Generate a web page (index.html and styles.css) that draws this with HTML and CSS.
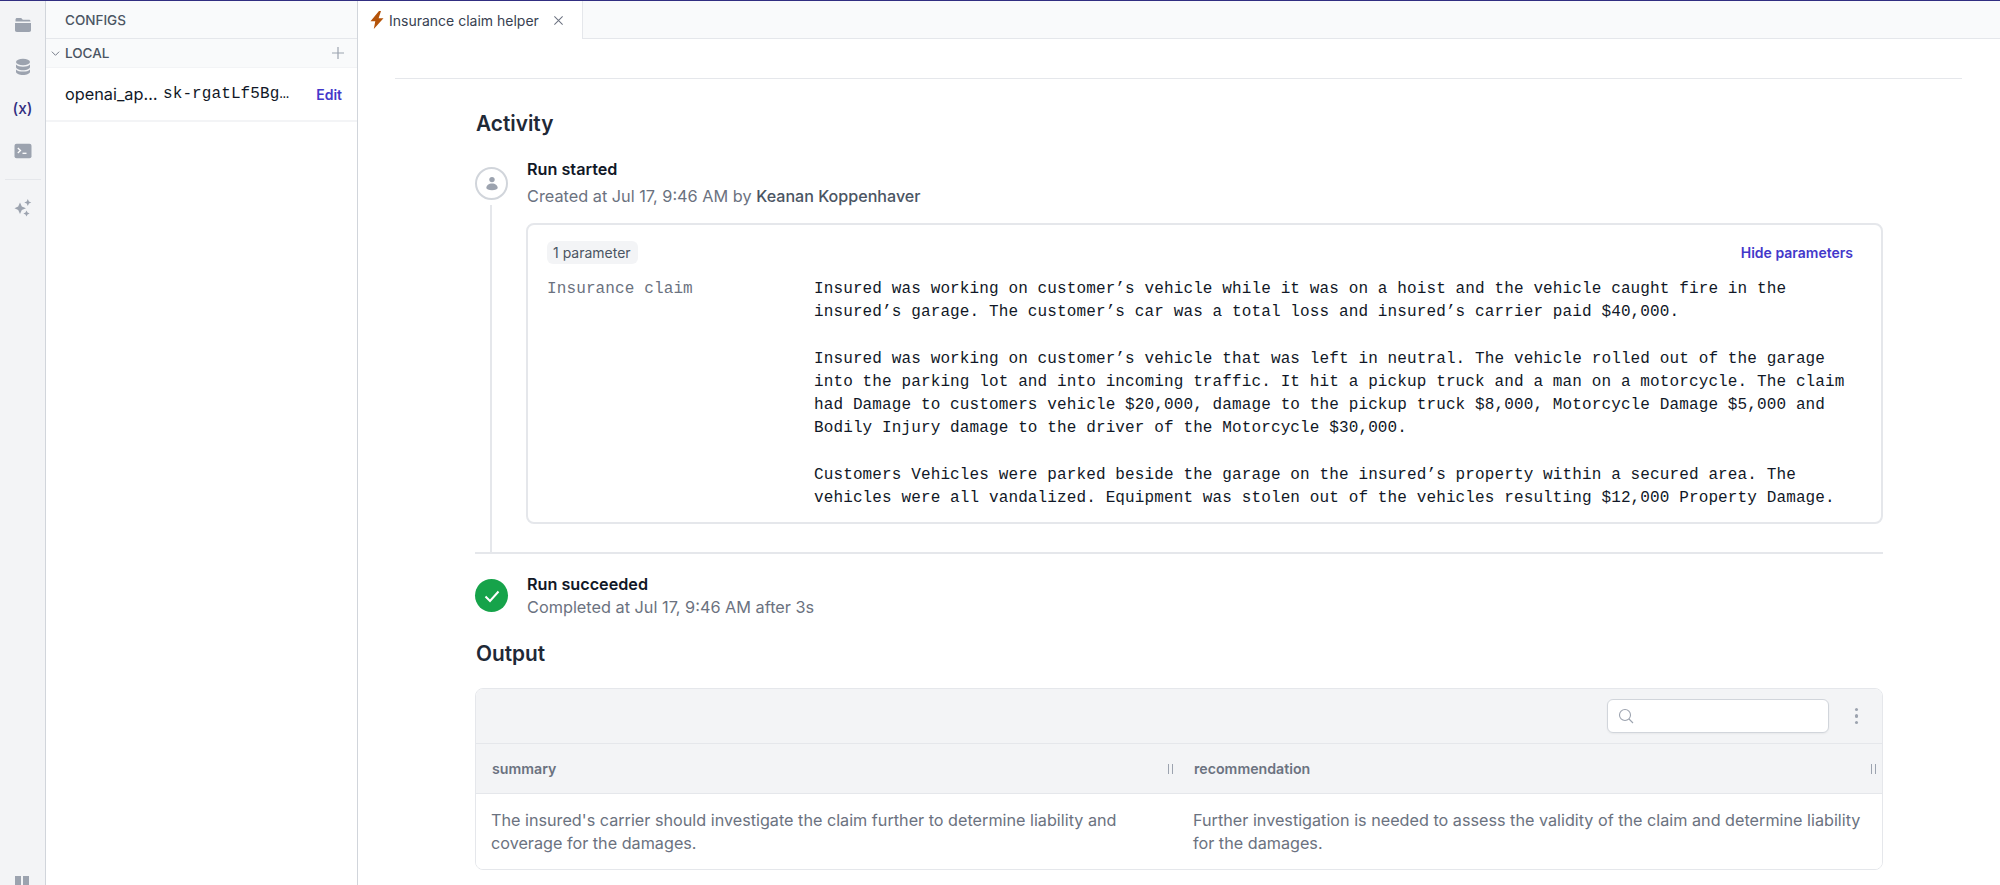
FILE: index.html
```html
<!DOCTYPE html>
<html lang="en">
<head>
<meta charset="utf-8">
<title>Insurance claim helper</title>
<link rel="stylesheet" href="styles.css">
</head>
<body>
<div class="app">
  <nav class="rail">
    <div class="rail-top">
      <svg class="rail-icon" viewBox="0 0 20 20"><path fill="#9ca3af" d="M4 3h4.200l1.600 1.800H16c.8 0 1.500.6 1.500 1.400v.3h-15V4.500C2.500 3.700 3.200 3 4 3z"/><path fill="#9ca3af" d="M2 8h16v7.300c0 1-.8 1.700-1.800 1.700H3.800c-1 0-1.800-.7-1.800-1.700z"/></svg>
      <svg class="rail-icon" viewBox="0 0 20 20"><ellipse fill="#9ca3af" cx="10" cy="5" rx="7" ry="3.300"/><path fill="#9ca3af" d="M3 7.600c1.300 1.500 4 2.200 7 2.200s5.700-.7 7-2.200v2.400c0 1.800-3.100 3.300-7 3.300s-7-1.500-7-3.300z"/><path fill="#9ca3af" d="M3 12.400c1.300 1.500 4 2.200 7 2.200s5.700-.7 7-2.200v2.300c0 1.800-3.100 3.300-7 3.300s-7-1.500-7-3.300z"/></svg>
      <span class="rail-var">(<i>x</i>)</span>
      <svg class="rail-icon" viewBox="0 0 20 20"><rect fill="#9ca3af" x="1.500" y="2.800" width="17" height="14.400" rx="2"/><path d="M4.800 7l2.700 2.500-2.700 2.500" fill="none" stroke="#fff" stroke-width="1.300"/><path d="M9.500 12.300h4" stroke="#fff" stroke-width="1.300"/></svg>
      <div class="rail-sep"></div>
      <svg class="rail-icon" viewBox="0 0 20 20"><path fill="#9ca3af" d="M7 4.500l1.800 4 4.200 1.700-4.200 1.700L7 16l-1.800-4.100L1.500 10.200l3.700-1.700z"/><path fill="#9ca3af" d="M14.800 1l1.100 2.400 2.400 1.100-2.400 1.100L14.800 8l-1.100-2.400-2.400-1.100 2.400-1.100z"/><path fill="#9ca3af" d="M13.500 12.500l1 2 2.100 1-2.100 1-1 2-1-2-2.100-1 2.100-1z"/></svg>
    </div>
    <div class="rail-pause"><span></span><span></span></div>
  </nav>

  <aside class="side">
    <div class="side-title">CONFIGS</div>
    <div class="side-group">
      <svg class="chev" viewBox="0 0 12 12"><path d="M2 4l4 4 4-4" fill="none" stroke="#6b7280" stroke-width="1"/></svg>
      <span class="side-group-name">LOCAL</span>
      <svg class="plus" viewBox="0 0 14 14"><path d="M7 1v12M1 7h12" stroke="#9ca3af" stroke-width="1.200"/></svg>
    </div>
    <div class="side-row">
      <span class="cfg-key">openai_ap…</span>
      <span class="cfg-val">sk-rgatLf5Bg…</span>
      <span class="cfg-edit">Edit</span>
    </div>
  </aside>

  <main class="main">
    <div class="tabs">
      <div class="tab">
        <svg class="bolt" viewBox="0 0 14 18"><path fill="#b45309" d="M9 0L.5 10.300h4.800L3.800 18l9.700-10.800H8.600L11 0z"/></svg>
        <span class="tab-name">Insurance claim helper</span>
        <svg class="tab-x" viewBox="0 0 12 12"><path d="M1.500 1.500l9 9M10.500 1.500l-9 9" stroke="#6b7280" stroke-width="1.100"/></svg>
      </div>
    </div>
    <div class="content">
      <div class="rule"></div>
      <div class="inner">
        <h2 class="heading">Activity</h2>
        <section class="event event-start">
          <div class="event-gutter">
            <div class="avatar">
              <svg viewBox="0 0 16 16"><circle cx="8" cy="3.600" r="2.700" fill="#9ca3af"/><path d="M2.300 12c0-2.800 2.500-4.600 5.700-4.600s5.700 1.800 5.700 4.600c0 1.200-2.500 2.200-5.700 2.200S2.300 13.200 2.300 12z" fill="#9ca3af"/></svg>
            </div>
            <div class="event-line"></div>
          </div>
          <div class="event-body">
            <div class="event-title">Run started</div>
            <div class="event-sub">Created at Jul 17, 9:46 AM by <span class="event-user">Keanan Koppenhaver</span></div>
            <div class="params">
              <div class="params-top">
                <span class="pill">1 parameter</span>
                <span class="link-hide">Hide parameters</span>
              </div>
              <div class="param-row">
                <div class="param-key">Insurance claim</div>
                <div class="param-val">Insured was working on customer’s vehicle while it was on a hoist and the vehicle caught fire in the
insured’s garage. The customer’s car was a total loss and insured’s carrier paid $40,000.

Insured was working on customer’s vehicle that was left in neutral. The vehicle rolled out of the garage
into the parking lot and into incoming traffic. It hit a pickup truck and a man on a motorcycle. The claim
had Damage to customers vehicle $20,000, damage to the pickup truck $8,000, Motorcycle Damage $5,000 and
Bodily Injury damage to the driver of the Motorcycle $30,000.

Customers Vehicles were parked beside the garage on the insured’s property within a secured area. The
vehicles were all vandalized. Equipment was stolen out of the vehicles resulting $12,000 Property Damage.</div>
              </div>
            </div>
          </div>
        </section>
        <div class="event-rule"></div>
        <section class="event event-done">
          <div class="check">
            <svg viewBox="0 0 16 16"><path d="M1.500 8.500l4.500 4.500L14.500 3.500" fill="none" stroke="#fff" stroke-width="2"/></svg>
          </div>
          <div class="event-body">
            <div class="event-title">Run succeeded</div>
            <div class="event-sub event-sub-tight">Completed at Jul 17, 9:46 AM after 3s</div>
          </div>
        </section>
        <h2 class="heading heading-output">Output</h2>
        <div class="table">
          <div class="toolbar">
            <div class="search">
              <svg viewBox="0 0 16 16"><circle cx="7" cy="7" r="5.500" fill="none" stroke="#9ca3af" stroke-width="1.100"/><path d="M11 11l4 4" stroke="#9ca3af" stroke-width="1.100"/></svg>
            </div>
            <div class="dots"><span></span><span></span><span></span></div>
          </div>
          <div class="thead">
            <div class="th"><span>summary</span><i class="grip"></i></div>
            <div class="th th-second"><span>recommendation</span><i class="grip"></i></div>
          </div>
          <div class="tbody">
            <div class="td td-first">The insured's carrier should investigate the claim further to determine liability and coverage for the damages.</div>
            <div class="td">Further investigation is needed to assess the validity of the claim and determine liability for the damages.</div>
          </div>
        </div>
      </div>
    </div>
  </main>
</div>
</body>
</html>
```
FILE: styles.css
```css
* { box-sizing: border-box; }
html, body { margin: 0; height: 885px; overflow: hidden; background: #fff; }
body { font-family: Inter, "Liberation Sans", sans-serif; color: #111827; }
.app { display: flex; height: 885px; border-top: 1px solid #312e81; }

.rail { width: 46px; flex: none; background: #f3f4f6; border-right: 1px solid #d1d5db; display: flex; flex-direction: column; justify-content: space-between; align-items: center; overflow: hidden; }
.rail-top { display: flex; flex-direction: column; align-items: center; padding-top: 14px; width: 100%; }
.rail-icon { width: 20px; height: 20px; display: block; margin-bottom: 22px; }
.rail-var { height: 20px; line-height: 20px; margin-bottom: 22px; font-size: 15.500px; font-weight: 500; color: #312e81; font-family: Inter, sans-serif; }
.rail-var i { font-style: normal; }
.rail-sep { width: 36px; height: 1px; background: #e5e7eb; margin: -4px 0 18px; }
.rail-pause { display: flex; gap: 2px; height: 9px; margin-right: 1px; }
.rail-pause span { width: 6px; height: 12px; background: #9ca3af; }

.side { width: 312px; flex: none; border-right: 1px solid #d1d5db; background: #fff; }
.side-title { height: 38px; padding-left: 19px; display: flex; align-items: center; font-size: 13.500px; font-weight: 500; color: #4b5563; background: #f9fafb; border-bottom: 1px solid #e5e7eb; }
.side-group { height: 29px; display: flex; align-items: center; padding: 0 12px 0 4px; background: #f9fafb; border-bottom: 1px solid #f3f4f6; font-size: 13.500px; font-weight: 500; color: #4b5563; }
.chev { width: 11px; height: 11px; margin-right: 4px; }
.side-group-name { flex: 1; }
.plus { width: 14px; height: 14px; }
.side-row { height: 54px; display: flex; align-items: center; padding: 0 15px 0 19px; border-bottom: 2px solid #f3f4f6; font-size: 16.300px; color: #111827; }
.cfg-key { width: 98px; flex: none; }
.cfg-val { flex: 1; font-family: "Liberation Mono", monospace; font-size: 16px; letter-spacing: 0.100px; }
.cfg-edit { font-size: 14px; font-weight: 600; color: #4338ca; }

.main { flex: 1; min-width: 0; display: flex; flex-direction: column; background: #fff; }
.tabs { height: 38px; flex: none; background: #f9fafb; border-bottom: 1px solid #e5e7eb; display: flex; }
.tab { width: 225px; height: 38px; background: #fff; border-right: 1px solid #e5e7eb; display: flex; align-items: center; padding-left: 12px; }
.bolt { width: 14px; height: 18px; margin-right: 5px; flex: none; }
.tab-name { font-size: 14px; color: #374151; }
.tab-x { width: 11px; height: 11px; margin-left: 14px; }

.content { flex: 1; min-height: 0; padding: 39px 38px 0 37px; overflow: hidden; }
.rule { height: 1px; background: #e5e7eb; }
.inner { padding: 0 79px 0 80px; }
.heading { margin: 0; font-size: 20.800px; line-height: 28px; font-weight: 600; color: #1f2937; padding: 31px 0 0 1px; }
.heading-output { padding-top: 0; margin-top: 21px; }

.event { display: flex; }
.event-start { margin-top: 19px; padding-bottom: 28px; }
.event-gutter { width: 51px; flex: none; display: flex; flex-direction: column; align-items: flex-start; margin: 10px 0 -28px; }
.avatar { width: 33px; height: 33px; flex: none; border: 2.500px solid #d1d5db; border-radius: 50%; display: flex; align-items: center; justify-content: center; background: #fff; }
.avatar svg { width: 16px; height: 16px; }
.event-line { width: 2px; flex: 1; background: #e5e7eb; margin: 5px 0 0 15px; }
.event-body { flex: 1; min-width: 0; }
.event-title { font-size: 16.200px; line-height: 24px; font-weight: 600; color: #111827; padding-left: 1px; }
.event-sub { font-size: 16.300px; line-height: 24px; color: #6b7280; margin-top: 3px; padding-left: 1px; }
.event-sub-tight { margin-top: -1px; }
.event-user { font-size: 16.100px; font-weight: 500; color: #4b5563; }

.params { margin-top: 15px; height: 301px; border: 2px solid #e5e7eb; border-radius: 8px; padding: 16px 28px 0 19px; }
.params-top { display: flex; justify-content: space-between; align-items: center; height: 23px; }
.pill { font-size: 14px; line-height: 23px; padding: 0 7px 0 6px; border-radius: 6px; background: #f3f4f6; color: #4b5563; }
.link-hide { font-size: 14px; font-weight: 600; color: #4338ca; }
.param-row { display: flex; margin-top: 14px; }
.param-key { width: 267px; flex: none; font-family: "Liberation Mono", monospace; font-size: 16px; line-height: 23.200px; letter-spacing: 0.120px; color: #6b7280; }
.param-val { flex: 1; white-space: pre; font-family: "Liberation Mono", monospace; font-size: 16px; line-height: 23.200px; letter-spacing: 0.120px; color: #111827; }

.event-rule { height: 2px; background: #e5e7eb; }
.event-done { margin-top: 25px; align-items: flex-start; }
.check { width: 33px; height: 33px; border-radius: 50%; background: #16a34a; flex: none; margin-right: 18px; display: flex; align-items: center; justify-content: center; }
.check svg { width: 16px; height: 16px; }
.event-done .event-body { margin-top: -7px; }

.table { margin-top: 20px; border: 1px solid #e5e7eb; border-radius: 8px; overflow: hidden; }
.toolbar { height: 55px; background: #f3f4f6; border-bottom: 1px solid #e5e7eb; display: flex; align-items: center; justify-content: flex-end; padding-right: 24px; }
.search { width: 222px; height: 34px; background: #fff; border: 1px solid #d1d5db; border-radius: 6px; display: flex; align-items: center; padding-left: 10px; box-shadow: 0 1px 2px rgba(0,0,0,.05); }
.search svg { width: 16px; height: 16px; }
.dots { display: flex; flex-direction: column; gap: 3px; margin-left: 26px; }
.dots span { width: 3.500px; height: 3.500px; border-radius: 50%; background: #9ca3af; }
.thead { height: 50px; background: #f3f4f6; border-bottom: 1px solid #e5e7eb; display: grid; grid-template-columns: 703px 1fr; }
.th { display: flex; align-items: center; justify-content: space-between; padding: 0 5px 0 16px; font-size: 14.200px; font-weight: 600; color: #6b7280; }
.th-second { padding-left: 15px; }
.grip { display: block; width: 5px; height: 10px; border-left: 1px solid #9ca3af; border-right: 1px solid #9ca3af; margin-right: 1px; }
.tbody { display: grid; grid-template-columns: 703px 1fr; background: #fff; height: 75px; }
.td { padding: 15px 16px 0 14px; font-size: 16.200px; line-height: 23px; color: #6b7280; }
.td-first { padding-left: 15px; }
```
